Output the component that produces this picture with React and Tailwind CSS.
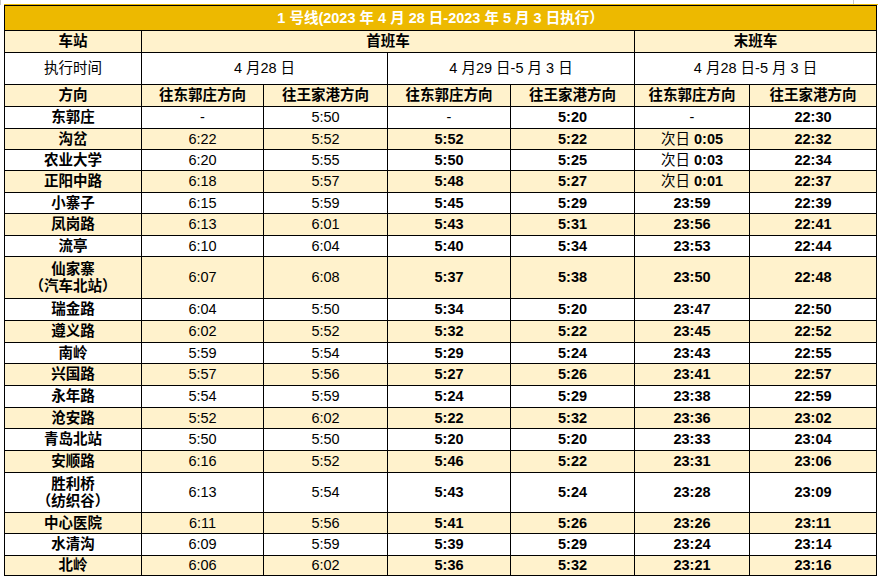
import React from "react";

const rows = [
  ["东郭庄", "-", "5:50", "-", "5:20", "-", "22:30"],
  ["沟岔", "6:22", "5:52", "5:52", "5:22", "次日 0:05", "22:32"],
  ["农业大学", "6:20", "5:55", "5:50", "5:25", "次日 0:03", "22:34"],
  ["正阳中路", "6:18", "5:57", "5:48", "5:27", "次日 0:01", "22:37"],
  ["小寨子", "6:15", "5:59", "5:45", "5:29", "23:59", "22:39"],
  ["凤岗路", "6:13", "6:01", "5:43", "5:31", "23:56", "22:41"],
  ["流亭", "6:10", "6:04", "5:40", "5:34", "23:53", "22:44"],
  ["仙家寨|（汽车北站）", "6:07", "6:08", "5:37", "5:38", "23:50", "22:48"],
  ["瑞金路", "6:04", "5:50", "5:34", "5:20", "23:47", "22:50"],
  ["遵义路", "6:02", "5:52", "5:32", "5:22", "23:45", "22:52"],
  ["南岭", "5:59", "5:54", "5:29", "5:24", "23:43", "22:55"],
  ["兴国路", "5:57", "5:56", "5:27", "5:26", "23:41", "22:57"],
  ["永年路", "5:54", "5:59", "5:24", "5:29", "23:38", "22:59"],
  ["沧安路", "5:52", "6:02", "5:22", "5:32", "23:36", "23:02"],
  ["青岛北站", "5:50", "5:50", "5:20", "5:20", "23:33", "23:04"],
  ["安顺路", "6:16", "5:52", "5:46", "5:22", "23:31", "23:06"],
  ["胜利桥|（纺织谷）", "6:13", "5:54", "5:43", "5:24", "23:28", "23:09"],
  ["中心医院", "6:11", "5:56", "5:41", "5:26", "23:26", "23:11"],
  ["水清沟", "6:09", "5:59", "5:39", "5:29", "23:24", "23:14"],
  ["北岭", "6:06", "6:02", "5:36", "5:32", "23:21", "23:16"],
];

const cell = "flex items-center justify-center text-center leading-[17px]";

function Value({ v, bold }) {
  if (v.startsWith("次日")) {
    return (
      <>
        <span className="font-normal">次日</span>
        <span className="font-bold">&nbsp;{v.slice(3)}</span>
      </>
    );
  }
  return <span className={bold && v !== "-" ? "font-bold" : ""}>{v}</span>;
}

export default function App() {
  return (
    <div className="w-[882px] h-[577px] bg-white text-black font-['Liberation_Sans','Noto_Sans_CJK_SC',sans-serif] text-[14.5px]">
      <div className="h-[4px] flex">
        <div className="w-px h-[5px] bg-[#c8c8c8]" />
        <div className="w-px h-[4px] bg-[#c8c8c8] ml-[852px]" />
      </div>
      <div className="ml-[4px] w-[874px] h-px bg-[#EDB900]" />
      <div className="ml-[4px] w-[873px] grid bg-black p-px gap-px grid-cols-[136px_121px_123px_122px_123px_114px_126px] grid-rows-[24px_21px_31px_21px_21px_20px_20px_21px_20px_21px_20px_41px_21px_21px_20px_21px_21px_20px_21px_21px_39px_20px_21px_19px]">
        <div className={`${cell} col-span-7 bg-[#EDB900] text-white font-bold`}>
          1 号线(2023 年 4 月 28 日-2023 年 5 月 3 日执行）
        </div>

        <div className={`${cell} bg-[#FFF2CC] font-bold`}>车站</div>
        <div className={`${cell} col-span-4 bg-[#FFF2CC] font-bold`}>首班车</div>
        <div className={`${cell} col-span-2 bg-[#FFF2CC] font-bold`}>末班车</div>

        <div className={`${cell} bg-white`}>执行时间</div>
        <div className={`${cell} col-span-2 bg-white`}>4 月28 日</div>
        <div className={`${cell} col-span-2 bg-white`}>4 月29 日-5 月 3 日</div>
        <div className={`${cell} col-span-2 bg-white`}>4 月28 日-5 月 3 日</div>

        <div className={`${cell} bg-[#FFF2CC] font-bold`}>方向</div>
        <div className={`${cell} bg-[#FFF2CC] font-bold`}>往东郭庄方向</div>
        <div className={`${cell} bg-[#FFF2CC] font-bold`}>往王家港方向</div>
        <div className={`${cell} bg-[#FFF2CC] font-bold`}>往东郭庄方向</div>
        <div className={`${cell} bg-[#FFF2CC] font-bold`}>往王家港方向</div>
        <div className={`${cell} bg-[#FFF2CC] font-bold`}>往东郭庄方向</div>
        <div className={`${cell} bg-[#FFF2CC] font-bold`}>往王家港方向</div>

        {rows.map((r, i) => {
          const bg = i % 2 === 1 ? "bg-[#FFF2CC]" : "bg-white";
          const parts = r[0].split("|");
          return (
            <React.Fragment key={i}>
              <div className={`${cell} ${bg} font-bold flex-col`}>
                {parts.map((p, j) => (
                  <span key={j}>{p}</span>
                ))}
              </div>
              {r.slice(1).map((v, k) => (
                <div key={k} className={`${cell} ${bg}`}>
                  <Value v={v} bold={k >= 2} />
                </div>
              ))}
            </React.Fragment>
          );
        })}
      </div>
    </div>
  );
}
